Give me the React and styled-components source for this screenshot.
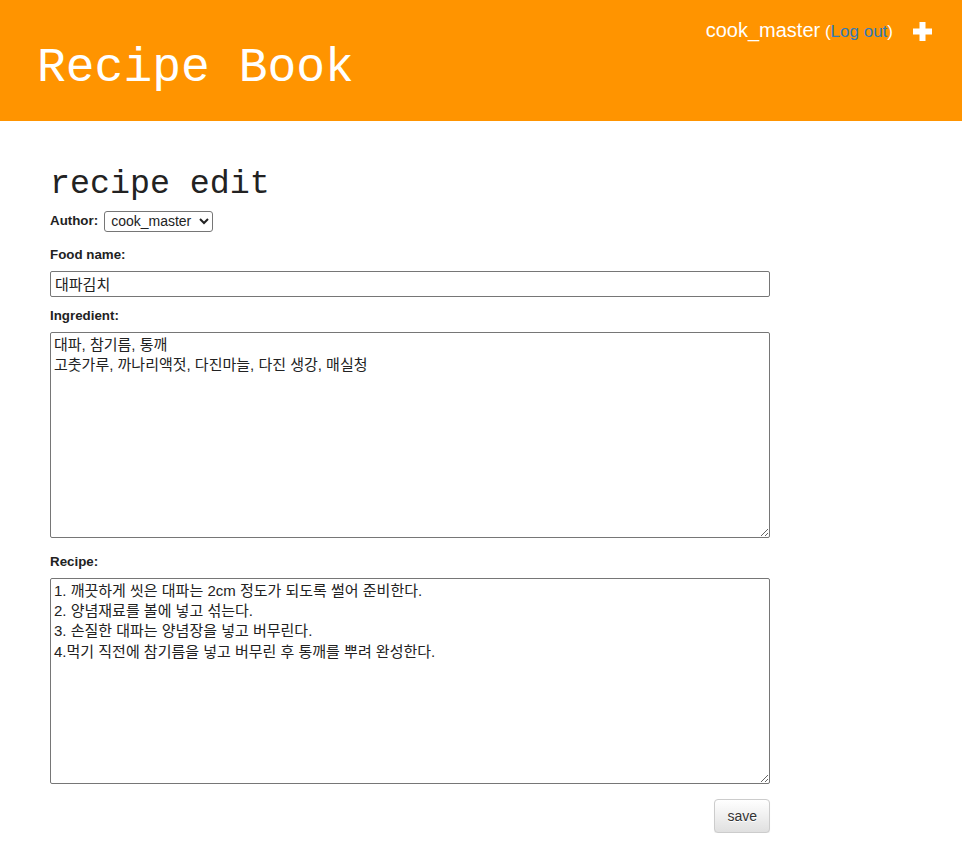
import styled, { createGlobalStyle } from "styled-components";

const GlobalStyle = createGlobalStyle`
  body {
    margin: 0;
    background: #fff;
    color: #333;
    font-family: "Liberation Sans", Arial, "Noto Sans CJK KR", sans-serif;
    font-size: 14px;
  }
`;

const Header = styled.div`
  display: flex;
  justify-content: space-between;
  align-items: flex-start;
  background-color: #ff9400;
  padding: 0 30px 26px 37px;
`;

const Title = styled.h1`
  margin: 42px 0 0;
  font-family: "Liberation Mono", "Courier New", monospace;
  font-weight: normal;
  font-size: 48px;
  line-height: 53px;
  color: #fff;
`;

const TopMenu = styled.div`
  display: flex;
  align-items: center;
  margin-top: 19px;
  color: #fff;
`;

const UserName = styled.span`
  font-size: 20px;
  line-height: 23px;
`;

const Small = styled.span`
  font-size: 17px;
`;

const LogOut = styled.a`
  color: #337ab7;
  text-decoration: none;
`;

const PlusIcon = styled.svg`
  width: 19px;
  height: 19px;
  margin-left: 20px;
  margin-top: 1px;
`;

const Content = styled.div`
  width: 720px;
  margin-left: 50px;
`;

const Heading = styled.h2`
  margin: 45px 0 8px;
  font-family: "Liberation Mono", "Courier New", monospace;
  font-weight: normal;
  font-size: 33.3px;
  line-height: 1.1;
  color: #222;
`;

const Form = styled.form`
  display: flex;
  flex-direction: column;
`;

const AuthorRow = styled.div`
  display: flex;
  align-items: center;
  gap: 6px;
`;

const Field = styled.div`
  display: flex;
  flex-direction: column;
  margin-top: ${(p) => p.$top}px;
`;

const Label = styled.label`
  display: block;
  font-size: 13.33px;
  font-weight: bold;
  line-height: 16px;
  color: #222;
  margin-bottom: ${(p) => (p.$inline ? 0 : 8)}px;
`;

const Select = styled.select`
  width: 109px;
  height: 21px;
  padding: 0 2px;
  border: 1px solid #767676;
  border-radius: 3px;
  background: #fff;
  font-family: "Liberation Sans", Arial, sans-serif;
  font-size: 14px;
  color: #222;
`;

const TextInput = styled.input`
  box-sizing: border-box;
  width: 720px;
  height: 26px;
  padding: 1px 4px;
  border: 1px solid #767676;
  border-radius: 2px;
  font-family: "Liberation Sans", Arial, "Noto Sans CJK KR", sans-serif;
  font-size: 15px;
  color: #222;
`;

const TextArea = styled.textarea`
  box-sizing: border-box;
  display: block;
  width: 720px;
  height: 206px;
  padding: 2px 3px;
  border: 1px solid #767676;
  border-radius: 2px;
  font-family: "Liberation Sans", Arial, "Noto Sans CJK KR", sans-serif;
  font-size: 15px;
  line-height: 20.3px;
  color: #222;
`;

const Actions = styled.div`
  display: flex;
  justify-content: flex-end;
  margin-top: 15px;
`;

const SaveButton = styled.button`
  height: 34px;
  padding: 6px 12px;
  border: 1px solid #ccc;
  border-radius: 4px;
  background-image: linear-gradient(to bottom, #fff 0, #e0e0e0 100%);
  box-shadow: inset 0 1px 0 rgba(255, 255, 255, 0.15), 0 1px 1px rgba(0, 0, 0, 0.075);
  text-shadow: 0 1px 0 #fff;
  font-family: "Liberation Sans", Arial, sans-serif;
  font-size: 14px;
  color: #333;
`;

const ingredients = "대파, 참기름, 통깨\n고춧가루, 까나리액젓, 다진마늘, 다진 생강, 매실청";

const recipe = [
  "1. 깨끗하게 씻은 대파는 2cm 정도가 되도록 썰어 준비한다.",
  "2. 양념재료를 볼에 넣고 섞는다.",
  "3. 손질한 대파는 양념장을 넣고 버무린다.",
  "4.먹기 직전에 참기름을 넣고 버무린 후 통깨를 뿌려 완성한다.",
].join("\n");

export default function App() {
  return (
    <>
      <GlobalStyle />
      <Header>
        <Title>Recipe Book</Title>
        <TopMenu>
          <UserName>
            cook_master
            <Small>
              {" "}(<LogOut href="#">Log out</LogOut>)
            </Small>
          </UserName>
          <PlusIcon viewBox="0 0 19 19">
            <path d="M6.5 0h6v6.5H19v6h-6.5V19h-6v-6.5H0v-6h6.5z" fill="#fff" />
          </PlusIcon>
        </TopMenu>
      </Header>

      <Content>
        <Heading>recipe edit</Heading>
        <Form onSubmit={(e) => e.preventDefault()}>
          <AuthorRow>
            <Label $inline htmlFor="author">Author:</Label>
            <Select id="author" defaultValue="cook_master">
              <option value="cook_master">cook_master</option>
            </Select>
          </AuthorRow>

          <Field $top={15}>
            <Label htmlFor="name">Food name:</Label>
            <TextInput id="name" type="text" defaultValue="대파김치" />
          </Field>

          <Field $top={11}>
            <Label htmlFor="ingredient">Ingredient:</Label>
            <TextArea id="ingredient" defaultValue={ingredients} />
          </Field>

          <Field $top={16}>
            <Label htmlFor="recipe">Recipe:</Label>
            <TextArea id="recipe" defaultValue={recipe} />
          </Field>

          <Actions>
            <SaveButton type="submit">save</SaveButton>
          </Actions>
        </Form>
      </Content>
    </>
  );
}
